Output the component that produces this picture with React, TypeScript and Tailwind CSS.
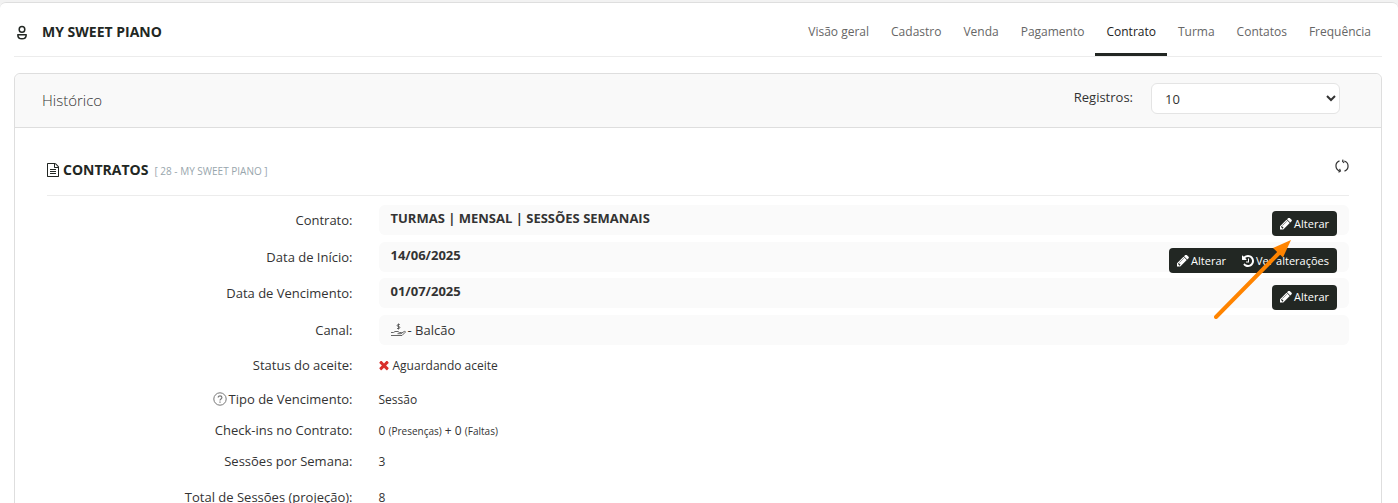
import React from 'react';

const TABS = ['Visão geral', 'Cadastro', 'Venda', 'Pagamento', 'Contrato', 'Turma', 'Contatos', 'Frequência'];

interface IconProps { className?: string; }

const PencilIcon: React.FC<IconProps> = ({ className }) => (
  <svg viewBox="128 192 1536 1536" fill="currentColor" className={className} aria-hidden="true">
    <path d="M491 1536l91-91-235-235-91 91v107h128v128h107zm523-928q0-22-22-22-10 0-17 7l-542 542q-7 7-7 17 0 22 22 22 10 0 17-7l542-542q7-7 7-17zm-54-192l416 416-832 832h-416v-416zm683 96q0 53-37 90l-166 166-416-416 166-165q36-38 90-38 53 0 91 38l235 234q37 39 37 91z" />
  </svg>
);

const HistoryIcon: React.FC<IconProps> = ({ className }) => (
  <svg viewBox="128 128 1536 1536" fill="currentColor" className={className} aria-hidden="true">
    <path d="M1664 896q0 156-61 298t-164 245-245 164-298 61q-172 0-327-72.5t-264-204.5q-7-10-6.5-22.5t8.5-20.5l137-138q10-9 25-9 16 2 23 12 73 95 179 147t225 52q104 0 198.5-40.5t163.5-109.5 109.5-163.5 40.5-198.5-40.5-198.5-109.5-163.5-163.5-109.5-198.5-40.5q-98 0-188 35.5t-160 101.5l137 138q31 30 14 69-17 40-59 40h-448q-26 0-45-19t-19-45v-448q0-42 40-59 39-17 69 14l130 129q107-101 244.5-156.5t284.5-55.5q156 0 298 61t245 164 164 245 61 298zm-640-288v448q0 14-9 23t-23 9h-320q-14 0-23-9t-9-23v-64q0-14 9-23t23-9h224v-352q0-14 9-23t23-9h64q14 0 23 9t9 23z" />
  </svg>
);

const TimesIcon: React.FC<IconProps> = ({ className }) => (
  <svg viewBox="256 384 1280 1280" fill="currentColor" className={className} aria-hidden="true">
    <path d="M1490 1322q0 40-28 68l-136 136q-28 28-68 28t-68-28l-294-294-294 294q-28 28-68 28t-68-28l-136-136q-28-28-28-68t28-68l294-294-294-294q-28-28-28-68t28-68l136-136q28-28 68-28t68 28l294 294 294-294q28-28 68-28t68 28l136 136q28 28 28 68t-28 68l-294 294 294 294q28 28 28 68z" />
  </svg>
);

const FileIcon: React.FC<IconProps> = ({ className }) => (
  <svg viewBox="0 0 1536 1792" fill="currentColor" className={className} aria-hidden="true">
    <path d="M1468 380q28 28 48 76t20 88v1152q0 40-28 68t-68 28h-1344q-40 0-68-28t-28-68v-1600q0-40 28-68t68-28h896q40 0 88 20t76 48zm-444-244v376h376q-10-29-22-41l-313-313q-12-12-41-22zm384 1528v-1024h-416q-40 0-68-28t-28-68v-416h-768v1536h1280zm-1024-864q0-14 9-23t23-9h704q14 0 23 9t9 23v64q0 14-9 23t-23 9h-704q-14 0-23-9t-9-23v-64zm736 224q14 0 23 9t9 23v64q0 14-9 23t-23 9h-704q-14 0-23-9t-9-23v-64q0-14 9-23t23-9h704zm0 256q14 0 23 9t9 23v64q0 14-9 23t-23 9h-704q-14 0-23-9t-9-23v-64q0-14 9-23t23-9h704z" />
  </svg>
);

const UserIcon: React.FC<IconProps> = ({ className }) => (
  <svg viewBox="0 0 12 16" fill="none" stroke="currentColor" strokeWidth="1.5" className={className} aria-hidden="true">
    <circle cx="6" cy="5.4" r="2.8" />
    <path d="M1.8 10.700h8.400c0 2.600-1.700 4.100-4.200 4.100s-4.200-1.500-4.200-4.100z" strokeLinejoin="round" />
  </svg>
);

const RefreshIcon: React.FC<IconProps> = ({ className }) => (
  <svg viewBox="0 0 14 14" fill="none" stroke="currentColor" strokeWidth="1.2" className={className} aria-hidden="true">
    <path d="M4.5 1.9A5.3 5.3 0 0 0 4.8 12M9.5 12.1A5.3 5.3 0 0 0 9.2 2" />
    <path d="M3.5 13.3L5.4 12 4.6 9.9M8 .7L7.600 2.300l1.500 1.500" />
  </svg>
);

const HandMoneyIcon: React.FC<IconProps> = ({ className }) => (
  <svg viewBox="0 0 15 14" fill="none" stroke="currentColor" strokeWidth="0.9" className={className} aria-hidden="true">
    <path d="M8.800 1.500H7.200c-1.400 0-1.400 2 0 2h.6c1.400 0 1.400 2 0 2H6M7.500.5v6" />
    <path d="M0 9.500h2.500L4 8.500h3l1.500 1H10c1 0 1 1.200 0 1.200H6.500M10.500 10l3-1.600c1-.3 1.200.6.5 1.100L11 12.500H0" />
  </svg>
);

const HelpIcon: React.FC<IconProps> = ({ className }) => (
  <svg viewBox="0 0 14 14" fill="none" stroke="currentColor" className={className} aria-hidden="true">
    <circle cx="7" cy="7" r="6.2" />
    <path d="M5.2 5.6c0-2.400 3.700-2.300 3.700-.1C8.900 7 7 6.800 7 8.500M7 9.500v1.300" strokeWidth="1.2" />
  </svg>
);

const buttonClass = 'flex h-[25px] cursor-pointer items-center gap-0.5 bg-[#222723] px-2 text-[11px] text-white';

const EditButton: React.FC<{ rounded: string }> = ({ rounded }) => (
  <button type="button" className={`${buttonClass} ${rounded}`}>
    <PencilIcon className="size-3" />
    Alterar
  </button>
);

interface RowProps {
  label: React.ReactNode;
  height: string;
  children: React.ReactNode;
}

const Row: React.FC<RowProps> = ({ label, height, children }) => (
  <div className={`grid grid-cols-[25fr_75fr] items-center ${height}`}>
    <dt className="flex items-center justify-end gap-0.5 pr-5">{label}</dt>
    <dd className="ml-1.5">{children}</dd>
  </div>
);

const FieldBox: React.FC<{ children: React.ReactNode; actions?: React.ReactNode }> = ({ children, actions }) => (
  <div className="flex h-[30px] items-center justify-between rounded-md bg-[#fafafa] px-3">
    {children}
    {actions && <div className="flex pt-2">{actions}</div>}
  </div>
);

const App: React.FC = () => {
  return (
    <div className="h-screen overflow-hidden bg-[#f2f2f2] pt-0.5 font-['Open_Sans','Noto_Sans',sans-serif] text-[13px] leading-5 text-[#333]">
      <main className="min-h-screen rounded-t-md border-t border-[#dedede] bg-white px-3.5">
        <header className="mr-0.5 flex h-[54px] items-stretch justify-between border-b border-[#ececec]">
          <div className="flex items-center gap-3.5 pt-1 pl-0.5 text-[#222723]">
            <UserIcon className="h-4 w-3" />
            <h1 className="text-sm font-bold">MY SWEET PIANO</h1>
          </div>
          <nav className="flex text-xs text-[#666]">
            {TABS.map((tab) => (
              <a
                key={tab}
                href="#"
                className={`flex items-center border-b-3 px-[11px] pt-2 ${tab === 'Contrato' ? 'border-[#222723] text-[#222]' : 'border-transparent'}`}
              >
                {tab}
              </a>
            ))}
          </nav>
        </header>

        <section className="mt-4 mr-0.5 rounded-t-md border border-[#dedede]">
          <div className="flex h-[54px] items-center justify-between rounded-t-md border-b border-[#dedede] bg-[#f9f9f9] pr-[41px] pl-[27px]">
            <h2 className="pb-0.5 text-[15px] font-light">Histórico</h2>
            <div className="flex items-center gap-[18px] pb-1">
              <label htmlFor="registros" className="pb-1">Registros:</label>
              <select id="registros" defaultValue="10" className="h-[31px] w-[189px] rounded-md border border-[#e4e4e4] bg-white pl-[9px]">
                <option>10</option>
                <option>25</option>
                <option>50</option>
              </select>
            </div>
          </div>

          <div className="px-8">
            {/* Contract title */}
            <div className="flex h-[68px] items-center justify-between border-b border-[#ececec]">
              <h3 className="flex items-center pt-4 text-sm font-bold text-[#222723]">
                <FileIcon className="mr-1 h-3.5 w-3" />
                CONTRATOS
                <small className="ml-1.5 pt-1 text-[10px] font-normal text-[#98a6ad]">[ 28 - MY SWEET PIANO ]</small>
              </h3>
              <button type="button" aria-label="Atualizar" className="cursor-pointer pt-2">
                <RefreshIcon className="size-3.5" />
              </button>
            </div>

            <dl className="relative pt-[5px]">
              <Row label="Contrato:" height="h-[37px]">
                <FieldBox actions={<EditButton rounded="rounded" />}>
                  <strong className="pb-1">TURMAS | MENSAL | SESSÕES SEMANAIS</strong>
                </FieldBox>
              </Row>
              <Row label="Data de Início:" height="h-[37px]">
                <FieldBox
                  actions={
                    <>
                      <EditButton rounded="rounded-l" />
                      <button type="button" className={`${buttonClass} rounded-r`}>
                        <HistoryIcon className="size-3" />
                        Ver alterações
                      </button>
                    </>
                  }
                >
                  <strong className="pb-1">14/06/2025</strong>
                </FieldBox>
              </Row>
              <Row label="Data de Vencimento:" height="h-[36px]">
                <FieldBox actions={<EditButton rounded="rounded" />}>
                  <strong className="pb-1">01/07/2025</strong>
                </FieldBox>
              </Row>
              <Row label="Canal:" height="h-[37px]">
                <FieldBox>
                  <span className="flex items-center gap-0.5">
                    <HandMoneyIcon className="h-3.5 w-[15px] text-[#555]" />
                    - Balcão
                  </span>
                </FieldBox>
              </Row>
              <Row label="Status do aceite:" height="h-[33px]">
                <span className="flex items-center gap-1 pt-0.5 text-xs">
                  <TimesIcon className="size-2.5 text-[#d9302c]" />
                  Aguardando aceite
                </span>
              </Row>
              <Row
                label={
                  <>
                    <HelpIcon className="size-3.5 text-[#777]" />
                    Tipo de Vencimento:
                  </>
                }
                height="h-[36px]"
              >
                <span className="text-xs">Sessão</span>
              </Row>
              <Row label="Check-ins no Contrato:" height="h-[26px]">
                <span className="text-xs">
                  0 <small className="text-[10px]">(Presenças)</small> + 0 <small className="text-[10px]">(Faltas)</small>
                </span>
              </Row>
              <Row label="Sessões por Semana:" height="h-[36px]">
                <span className="text-xs">3</span>
              </Row>
              <Row label="Total de Sessões (projeção):" height="h-[36px]">
                <span className="text-xs">8</span>
              </Row>

              {/* Callout arrow */}
              <svg viewBox="0 0 78 80" className="pointer-events-none absolute top-[43px] right-[57px] h-20 w-[78px]" aria-hidden="true">
                <path d="M2 78L66 13" stroke="#ff8400" strokeWidth="4" strokeLinecap="round" />
                <path d="M77 1L59 9l10 9.500z" fill="#ff8400" />
              </svg>
            </dl>
          </div>
        </section>
      </main>
    </div>
  );
};

export default App;
